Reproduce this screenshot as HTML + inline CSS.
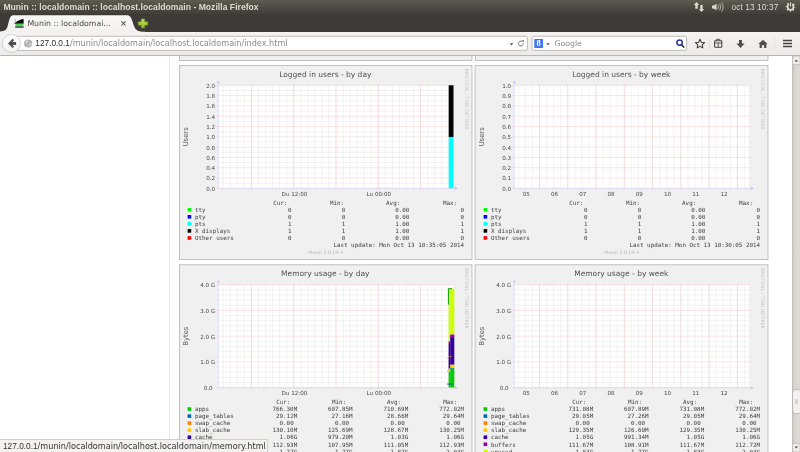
<!DOCTYPE html>
<html lang="en"><head><meta charset="utf-8">
<title>Munin :: localdomain :: localhost.localdomain</title>
<style>
html,body{margin:0;padding:0;}
body{width:800px;height:452px;overflow:hidden;position:relative;background:#fff;font-family:"Liberation Sans","DejaVu Sans",sans-serif;}
.abs{position:absolute;}
#gfx{position:absolute;left:0;top:0;width:800px;height:452px;will-change:transform;}
#gfx text{font-family:"DejaVu Sans","Liberation Sans",sans-serif;}
#gfx .ti{font-size:7.5px;fill:#505050;}
#gfx .ax{font-size:5.6px;fill:#484848;}
#gfx .yl{font-size:6.8px;fill:#585858;}
#gfx .mo{font-family:"DejaVu Sans Mono","Liberation Mono",monospace;font-size:5.86px;fill:#404040;}
#gfx .wm{font-size:4.55px;fill:#c0c0c0;letter-spacing:0.1px;}
#gfx .mu{font-size:4.6px;fill:#b5b5b5;}
/* chrome */
#titlebar{left:0;top:0;width:800px;height:14px;background:linear-gradient(#5f5c51,#504e46 40%,#3f3e39);}
#titlebar .t{left:3.4px;top:2.3px;font-family:"Liberation Sans",sans-serif;font-size:8.6px;font-weight:bold;color:#dfdbd2;white-space:nowrap;line-height:11px;letter-spacing:0.02px;}
#tabbar{left:0;top:14px;width:800px;height:18px;background:#3c3b37;}
#navbar{left:0;top:32px;width:800px;height:23px;background:linear-gradient(#f4f3f2,#ecebe8);border-bottom:1px solid #b9b6b1;box-sizing:content-box;}
#vline{left:169px;top:56px;width:1px;height:396px;background:#e5e7fb;}
#sb{left:792px;top:56px;width:8px;height:396px;background:linear-gradient(90deg,#cfccc7,#dbd8d4 40%,#dddad6);border-left:1px solid #c2beb8;box-sizing:border-box;}
#status{left:0;top:439px;width:268px;height:13px;background:#f3f2f1;border-top:1px solid #d2cfcb;border-right:1px solid #d2cfcb;border-top-right-radius:2px;box-sizing:border-box;font-family:"DejaVu Sans","Liberation Sans",sans-serif;font-size:8.14px;color:#333;line-height:13.5px;padding-left:3px;white-space:nowrap;}
#status .d{color:#333;}

#titlebar .clock{left:731.5px;top:2.4px;font-size:8.3px;color:#dfdbd2;white-space:nowrap;line-height:11px;letter-spacing:0.1px;}
#tabbar .tabt{left:27.4px;top:4.3px;font-family:"DejaVu Sans","Liberation Sans",sans-serif;font-size:7.75px;color:#4a4a4a;white-space:nowrap;line-height:11px;}
#urlbar{left:19.5px;top:4px;width:507.5px;height:13px;background:#fff;border:1px solid #bab7b2;border-radius:2px;box-sizing:content-box;}
#searchbar{left:531.5px;top:4px;width:154.5px;height:13px;background:#fff;border:1px solid #bab7b2;border-radius:2px;box-sizing:content-box;}
#back{left:1.8px;top:2px;width:18px;height:18px;border-radius:50%;background:linear-gradient(#fdfdfd,#eceae8);border:1px solid #aab3bf;box-sizing:content-box;}
.urlt{left:35.3px;top:6.1px;font-family:"DejaVu Sans","Liberation Sans",sans-serif;font-size:8.14px;color:#8a8a8a;white-space:nowrap;line-height:11px;}
.d{font-family:"Liberation Sans",sans-serif;font-size:8.3px;color:#2a2a2a;}
.gt{left:554.4px;top:6.1px;font-family:"DejaVu Sans","Liberation Sans",sans-serif;font-size:7.8px;color:#8c8c8c;white-space:nowrap;line-height:11px;}
</style></head>
<body>
<svg id="gfx" width="800" height="452" viewBox="0 0 800 452">
<rect x="179.5" y="40.5" width="292.5" height="20" fill="#f0f0f0" stroke="#b4b4b4" stroke-width="0.8"/>
<rect x="475.5" y="40.5" width="292.5" height="20" fill="#f0f0f0" stroke="#b4b4b4" stroke-width="0.8"/>
<rect x="179.50" y="65.50" width="292.50" height="194.00" fill="#f0f0f0" stroke="#b4b4b4" stroke-width="0.8"/>
<rect x="218.40" y="85.30" width="234.50" height="103.10" fill="#fff"/>
<path d="M223.20 85.30v103.10M230.25 85.30v103.10M237.30 85.30v103.10M244.35 85.30v103.10M251.40 85.30v103.10M258.45 85.30v103.10M265.50 85.30v103.10M272.55 85.30v103.10M279.60 85.30v103.10M286.65 85.30v103.10M293.70 85.30v103.10M300.75 85.30v103.10M307.80 85.30v103.10M314.85 85.30v103.10M321.90 85.30v103.10M328.95 85.30v103.10M336.00 85.30v103.10M343.05 85.30v103.10M350.10 85.30v103.10M357.15 85.30v103.10M364.20 85.30v103.10M371.25 85.30v103.10M378.30 85.30v103.10M385.35 85.30v103.10M392.40 85.30v103.10M399.45 85.30v103.10M406.50 85.30v103.10M413.55 85.30v103.10M420.60 85.30v103.10M427.65 85.30v103.10M434.70 85.30v103.10M441.75 85.30v103.10M448.80 85.30v103.10M218.40 90.45h234.50M218.40 100.77h234.50M218.40 111.08h234.50M218.40 121.38h234.50M218.40 131.69h234.50M218.40 142.00h234.50M218.40 152.31h234.50M218.40 162.62h234.50M218.40 172.94h234.50M218.40 183.25h234.50" stroke="#d6d2d2" stroke-width="0.45" fill="none" opacity="0.6"/>
<path d="M251.40 84.80v104.60M293.70 84.80v104.60M336.00 84.80v104.60M378.30 84.80v104.60M420.60 84.80v104.60M216.40 188.40h238.00M216.40 178.09h238.00M216.40 167.78h238.00M216.40 157.47h238.00M216.40 147.16h238.00M216.40 136.85h238.00M216.40 126.54h238.00M216.40 116.23h238.00M216.40 105.92h238.00M216.40 95.61h238.00M216.40 85.30h238.00" stroke="#f6aaaa" stroke-width="0.5" fill="none" opacity="0.62"/>
<rect x="448.70" y="85.30" width="4.8" height="51.8" fill="#000"/><rect x="448.70" y="136.90" width="4.8" height="51.5" fill="#00ffff"/>
<path d="M218.40 82.30V188.40H455.90" stroke="#d2d4f6" stroke-width="0.6" fill="none"/>
<path d="M454.90 187.10l3 1.3l-3 1.3zM217.10 83.30l1.3 -2.6l1.3 2.6z" fill="#b9bcf0"/>
<text x="325.30" y="76.60" class="ti" text-anchor="middle">Logged in users - by day</text>
<text x="215.20" y="190.80" class="ax" text-anchor="end">0.0</text>
<text x="215.20" y="180.49" class="ax" text-anchor="end">0.2</text>
<text x="215.20" y="170.18" class="ax" text-anchor="end">0.4</text>
<text x="215.20" y="159.87" class="ax" text-anchor="end">0.6</text>
<text x="215.20" y="149.56" class="ax" text-anchor="end">0.8</text>
<text x="215.20" y="139.25" class="ax" text-anchor="end">1.0</text>
<text x="215.20" y="128.94" class="ax" text-anchor="end">1.2</text>
<text x="215.20" y="118.63" class="ax" text-anchor="end">1.4</text>
<text x="215.20" y="108.32" class="ax" text-anchor="end">1.6</text>
<text x="215.20" y="98.01" class="ax" text-anchor="end">1.8</text>
<text x="215.20" y="87.70" class="ax" text-anchor="end">2.0</text>
<text x="294.40" y="196.00" class="ax" text-anchor="middle">Du 12:00</text>
<text x="378.80" y="196.00" class="ax" text-anchor="middle">Lu 00:00</text>
<text transform="translate(188.30 136.85) rotate(-90)" class="yl" text-anchor="middle">Users</text>
<text transform="translate(465.20 68.80) rotate(90)" class="wm">RRDTOOL / TOBI OETIKER</text>
<text x="273.20" y="204.90" class="mo">Cur:</text>
<text x="329.90" y="204.90" class="mo">Min:</text>
<text x="386.10" y="204.90" class="mo">Avg:</text>
<text x="443.00" y="204.90" class="mo">Max:</text>
<rect x="187.60" y="207.95" width="3.6" height="3.6" fill="#00ff00"/>
<text x="195.00" y="211.95" class="mo">tty</text>
<text x="291.60" y="211.95" class="mo" text-anchor="end" xml:space="preserve">0</text>
<text x="345.40" y="211.95" class="mo" text-anchor="end" xml:space="preserve">0</text>
<text x="409.40" y="211.95" class="mo" text-anchor="end" xml:space="preserve">0.00</text>
<text x="464.00" y="211.95" class="mo" text-anchor="end" xml:space="preserve">0</text>
<rect x="187.60" y="215.00" width="3.6" height="3.6" fill="#0000ff"/>
<text x="195.00" y="219.00" class="mo">pty</text>
<text x="291.60" y="219.00" class="mo" text-anchor="end" xml:space="preserve">0</text>
<text x="345.40" y="219.00" class="mo" text-anchor="end" xml:space="preserve">0</text>
<text x="409.40" y="219.00" class="mo" text-anchor="end" xml:space="preserve">0.00</text>
<text x="464.00" y="219.00" class="mo" text-anchor="end" xml:space="preserve">0</text>
<rect x="187.60" y="222.05" width="3.6" height="3.6" fill="#00ffff"/>
<text x="195.00" y="226.05" class="mo">pts</text>
<text x="291.60" y="226.05" class="mo" text-anchor="end" xml:space="preserve">1</text>
<text x="345.40" y="226.05" class="mo" text-anchor="end" xml:space="preserve">1</text>
<text x="409.40" y="226.05" class="mo" text-anchor="end" xml:space="preserve">1.00</text>
<text x="464.00" y="226.05" class="mo" text-anchor="end" xml:space="preserve">1</text>
<rect x="187.60" y="229.10" width="3.6" height="3.6" fill="#000"/>
<text x="195.00" y="233.10" class="mo">X displays</text>
<text x="291.60" y="233.10" class="mo" text-anchor="end" xml:space="preserve">1</text>
<text x="345.40" y="233.10" class="mo" text-anchor="end" xml:space="preserve">1</text>
<text x="409.40" y="233.10" class="mo" text-anchor="end" xml:space="preserve">1.00</text>
<text x="464.00" y="233.10" class="mo" text-anchor="end" xml:space="preserve">1</text>
<rect x="187.60" y="236.15" width="3.6" height="3.6" fill="#ff0000"/>
<text x="195.00" y="240.15" class="mo">Other users</text>
<text x="291.60" y="240.15" class="mo" text-anchor="end" xml:space="preserve">0</text>
<text x="345.40" y="240.15" class="mo" text-anchor="end" xml:space="preserve">0</text>
<text x="409.40" y="240.15" class="mo" text-anchor="end" xml:space="preserve">0.00</text>
<text x="464.00" y="240.15" class="mo" text-anchor="end" xml:space="preserve">0</text>
<text x="464.00" y="247.20" class="mo" text-anchor="end">Last update: Mon Oct 13 10:35:05 2014</text>
<text x="325.50" y="253.70" class="mu" text-anchor="middle">Munin 2.0.19-3</text>
<rect x="475.10" y="65.50" width="292.90" height="194.00" fill="#f0f0f0" stroke="#b4b4b4" stroke-width="0.8"/>
<rect x="514.40" y="85.30" width="234.50" height="103.10" fill="#fff"/>
<path d="M518.29 85.30v103.10M525.36 85.30v103.10M532.43 85.30v103.10M539.50 85.30v103.10M546.57 85.30v103.10M553.64 85.30v103.10M560.71 85.30v103.10M567.78 85.30v103.10M574.85 85.30v103.10M581.92 85.30v103.10M588.99 85.30v103.10M596.06 85.30v103.10M603.13 85.30v103.10M610.20 85.30v103.10M617.27 85.30v103.10M624.34 85.30v103.10M631.41 85.30v103.10M638.48 85.30v103.10M645.55 85.30v103.10M652.62 85.30v103.10M659.69 85.30v103.10M666.76 85.30v103.10M673.83 85.30v103.10M680.90 85.30v103.10M687.97 85.30v103.10M695.04 85.30v103.10M702.11 85.30v103.10M709.18 85.30v103.10M716.25 85.30v103.10M723.32 85.30v103.10M730.39 85.30v103.10M737.46 85.30v103.10M744.53 85.30v103.10" stroke="#d6d2d2" stroke-width="0.45" fill="none" opacity="0.6"/>
<path d="M539.50 84.80v104.60M567.78 84.80v104.60M596.06 84.80v104.60M624.34 84.80v104.60M652.62 84.80v104.60M680.90 84.80v104.60M709.18 84.80v104.60M737.46 84.80v104.60M512.40 188.40h238.00M512.40 178.09h238.00M512.40 167.78h238.00M512.40 157.47h238.00M512.40 147.16h238.00M512.40 136.85h238.00M512.40 126.54h238.00M512.40 116.23h238.00M512.40 105.92h238.00M512.40 95.61h238.00M512.40 85.30h238.00" stroke="#f6aaaa" stroke-width="0.5" fill="none" opacity="0.62"/>

<path d="M514.40 82.30V188.40H751.90" stroke="#d2d4f6" stroke-width="0.6" fill="none"/>
<path d="M750.90 187.10l3 1.3l-3 1.3zM513.10 83.30l1.3 -2.6l1.3 2.6z" fill="#b9bcf0"/>
<text x="621.30" y="76.60" class="ti" text-anchor="middle">Logged in users - by week</text>
<text x="511.20" y="190.80" class="ax" text-anchor="end">0.0</text>
<text x="511.20" y="180.49" class="ax" text-anchor="end">0.1</text>
<text x="511.20" y="170.18" class="ax" text-anchor="end">0.2</text>
<text x="511.20" y="159.87" class="ax" text-anchor="end">0.3</text>
<text x="511.20" y="149.56" class="ax" text-anchor="end">0.4</text>
<text x="511.20" y="139.25" class="ax" text-anchor="end">0.5</text>
<text x="511.20" y="128.94" class="ax" text-anchor="end">0.6</text>
<text x="511.20" y="118.63" class="ax" text-anchor="end">0.7</text>
<text x="511.20" y="108.32" class="ax" text-anchor="end">0.8</text>
<text x="511.20" y="98.01" class="ax" text-anchor="end">0.9</text>
<text x="511.20" y="87.70" class="ax" text-anchor="end">1.0</text>
<text x="526.20" y="196.00" class="ax" text-anchor="middle">05</text>
<text x="554.46" y="196.00" class="ax" text-anchor="middle">06</text>
<text x="582.72" y="196.00" class="ax" text-anchor="middle">07</text>
<text x="610.98" y="196.00" class="ax" text-anchor="middle">08</text>
<text x="639.24" y="196.00" class="ax" text-anchor="middle">09</text>
<text x="667.50" y="196.00" class="ax" text-anchor="middle">10</text>
<text x="695.76" y="196.00" class="ax" text-anchor="middle">11</text>
<text x="724.02" y="196.00" class="ax" text-anchor="middle">12</text>
<text transform="translate(484.30 136.85) rotate(-90)" class="yl" text-anchor="middle">Users</text>
<text transform="translate(761.20 68.80) rotate(90)" class="wm">RRDTOOL / TOBI OETIKER</text>
<text x="569.20" y="204.90" class="mo">Cur:</text>
<text x="625.90" y="204.90" class="mo">Min:</text>
<text x="682.10" y="204.90" class="mo">Avg:</text>
<text x="739.00" y="204.90" class="mo">Max:</text>
<rect x="483.60" y="207.95" width="3.6" height="3.6" fill="#00ff00"/>
<text x="491.00" y="211.95" class="mo">tty</text>
<text x="587.60" y="211.95" class="mo" text-anchor="end" xml:space="preserve">0</text>
<text x="641.40" y="211.95" class="mo" text-anchor="end" xml:space="preserve">0</text>
<text x="705.40" y="211.95" class="mo" text-anchor="end" xml:space="preserve">0.00</text>
<text x="760.00" y="211.95" class="mo" text-anchor="end" xml:space="preserve">0</text>
<rect x="483.60" y="215.00" width="3.6" height="3.6" fill="#0000ff"/>
<text x="491.00" y="219.00" class="mo">pty</text>
<text x="587.60" y="219.00" class="mo" text-anchor="end" xml:space="preserve">0</text>
<text x="641.40" y="219.00" class="mo" text-anchor="end" xml:space="preserve">0</text>
<text x="705.40" y="219.00" class="mo" text-anchor="end" xml:space="preserve">0.00</text>
<text x="760.00" y="219.00" class="mo" text-anchor="end" xml:space="preserve">0</text>
<rect x="483.60" y="222.05" width="3.6" height="3.6" fill="#00ffff"/>
<text x="491.00" y="226.05" class="mo">pts</text>
<text x="587.60" y="226.05" class="mo" text-anchor="end" xml:space="preserve">1</text>
<text x="641.40" y="226.05" class="mo" text-anchor="end" xml:space="preserve">1</text>
<text x="705.40" y="226.05" class="mo" text-anchor="end" xml:space="preserve">1.00</text>
<text x="760.00" y="226.05" class="mo" text-anchor="end" xml:space="preserve">1</text>
<rect x="483.60" y="229.10" width="3.6" height="3.6" fill="#000"/>
<text x="491.00" y="233.10" class="mo">X displays</text>
<text x="587.60" y="233.10" class="mo" text-anchor="end" xml:space="preserve">1</text>
<text x="641.40" y="233.10" class="mo" text-anchor="end" xml:space="preserve">1</text>
<text x="705.40" y="233.10" class="mo" text-anchor="end" xml:space="preserve">1.00</text>
<text x="760.00" y="233.10" class="mo" text-anchor="end" xml:space="preserve">1</text>
<rect x="483.60" y="236.15" width="3.6" height="3.6" fill="#ff0000"/>
<text x="491.00" y="240.15" class="mo">Other users</text>
<text x="587.60" y="240.15" class="mo" text-anchor="end" xml:space="preserve">0</text>
<text x="641.40" y="240.15" class="mo" text-anchor="end" xml:space="preserve">0</text>
<text x="705.40" y="240.15" class="mo" text-anchor="end" xml:space="preserve">0.00</text>
<text x="760.00" y="240.15" class="mo" text-anchor="end" xml:space="preserve">0</text>
<text x="760.00" y="247.20" class="mo" text-anchor="end">Last update: Mon Oct 13 10:30:05 2014</text>
<text x="621.50" y="253.70" class="mu" text-anchor="middle">Munin 2.0.19-3</text>
<rect x="179.50" y="264.80" width="292.50" height="259.00" fill="#f0f0f0" stroke="#b4b4b4" stroke-width="0.8"/>
<rect x="218.40" y="284.60" width="234.50" height="103.10" fill="#fff"/>
<path d="M223.20 284.60v103.10M230.25 284.60v103.10M237.30 284.60v103.10M244.35 284.60v103.10M251.40 284.60v103.10M258.45 284.60v103.10M265.50 284.60v103.10M272.55 284.60v103.10M279.60 284.60v103.10M286.65 284.60v103.10M293.70 284.60v103.10M300.75 284.60v103.10M307.80 284.60v103.10M314.85 284.60v103.10M321.90 284.60v103.10M328.95 284.60v103.10M336.00 284.60v103.10M343.05 284.60v103.10M350.10 284.60v103.10M357.15 284.60v103.10M364.20 284.60v103.10M371.25 284.60v103.10M378.30 284.60v103.10M385.35 284.60v103.10M392.40 284.60v103.10M399.45 284.60v103.10M406.50 284.60v103.10M413.55 284.60v103.10M420.60 284.60v103.10M427.65 284.60v103.10M434.70 284.60v103.10M441.75 284.60v103.10M448.80 284.60v103.10M218.40 289.75h234.50M218.40 294.91h234.50M218.40 300.06h234.50M218.40 305.22h234.50M218.40 315.54h234.50M218.40 320.69h234.50M218.40 325.85h234.50M218.40 331.00h234.50M218.40 341.32h234.50M218.40 346.47h234.50M218.40 351.62h234.50M218.40 356.78h234.50M218.40 367.10h234.50M218.40 372.25h234.50M218.40 377.41h234.50M218.40 382.56h234.50" stroke="#d6d2d2" stroke-width="0.45" fill="none" opacity="0.6"/>
<path d="M251.40 284.10v104.60M293.70 284.10v104.60M336.00 284.10v104.60M378.30 284.10v104.60M420.60 284.10v104.60M216.40 387.70h238.00M216.40 361.92h238.00M216.40 336.14h238.00M216.40 310.36h238.00M216.40 284.58h238.00" stroke="#f6aaaa" stroke-width="0.5" fill="none" opacity="0.62"/>
<rect x="448.60" y="372.39" width="1.70" height="15.46" fill="#00cc00"/><rect x="448.60" y="371.69" width="1.70" height="0.85" fill="#0066b3"/><rect x="448.60" y="368.52" width="1.70" height="3.32" fill="#ffcc00"/><rect x="448.60" y="343.87" width="1.70" height="24.80" fill="#330099"/><rect x="448.60" y="341.17" width="1.70" height="2.86" fill="#990099"/><rect x="448.60" y="288.45" width="1.70" height="52.87" fill="#ccff00"/><rect x="450.20" y="368.42" width="4.10" height="19.43" fill="#00cc00"/><rect x="450.20" y="367.69" width="4.10" height="0.87" fill="#0066b3"/><rect x="450.20" y="364.42" width="4.10" height="3.42" fill="#ffcc00"/><rect x="450.20" y="337.09" width="4.10" height="27.48" fill="#330099"/><rect x="450.20" y="334.26" width="4.10" height="2.99" fill="#990099"/><rect x="450.20" y="288.63" width="4.10" height="45.78" fill="#ccff00"/><path d="M448.40 304.69V288.70h3.6" stroke="#00a000" stroke-width="1" fill="none"/><path d="M447.40 358.83l1.8 -2.4h2.6" stroke="#e8900a" stroke-width="0.8" fill="none"/><path d="M447.40 371.72l1.6 -2.6l2 -2.2" stroke="#e8900a" stroke-width="0.8" fill="none"/><path d="M447.00 384.09h5.6" stroke="#0a4fa8" stroke-width="0.9" fill="none"/>
<path d="M218.40 281.60V387.70H455.90" stroke="#d2d4f6" stroke-width="0.6" fill="none"/>
<path d="M454.90 386.40l3 1.3l-3 1.3zM217.10 282.60l1.3 -2.6l1.3 2.6z" fill="#b9bcf0"/>
<text x="325.30" y="275.90" class="ti" text-anchor="middle">Memory usage - by day</text>
<text x="212.60" y="390.10" class="ax" text-anchor="end">0.0</text>
<text x="215.20" y="364.32" class="ax" text-anchor="end">1.0 G</text>
<text x="215.20" y="338.54" class="ax" text-anchor="end">2.0 G</text>
<text x="215.20" y="312.76" class="ax" text-anchor="end">3.0 G</text>
<text x="215.20" y="286.98" class="ax" text-anchor="end">4.0 G</text>
<text x="294.40" y="395.30" class="ax" text-anchor="middle">Du 12:00</text>
<text x="378.80" y="395.30" class="ax" text-anchor="middle">Lu 00:00</text>
<text transform="translate(188.30 336.15) rotate(-90)" class="yl" text-anchor="middle">Bytes</text>
<text transform="translate(465.20 268.10) rotate(90)" class="wm">RRDTOOL / TOBI OETIKER</text>
<text x="276.20" y="404.20" class="mo">Cur:</text>
<text x="331.90" y="404.20" class="mo">Min:</text>
<text x="387.00" y="404.20" class="mo">Avg:</text>
<text x="443.20" y="404.20" class="mo">Max:</text>
<rect x="187.60" y="407.25" width="3.6" height="3.6" fill="#00cc00"/>
<text x="195.00" y="411.25" class="mo">apps</text>
<text x="297.20" y="411.25" class="mo" text-anchor="end" xml:space="preserve">766.30M</text>
<text x="352.60" y="411.25" class="mo" text-anchor="end" xml:space="preserve">607.85M</text>
<text x="408.20" y="411.25" class="mo" text-anchor="end" xml:space="preserve">710.69M</text>
<text x="464.00" y="411.25" class="mo" text-anchor="end" xml:space="preserve">772.02M</text>
<rect x="187.60" y="414.30" width="3.6" height="3.6" fill="#0066b3"/>
<text x="195.00" y="418.30" class="mo">page_tables</text>
<text x="297.20" y="418.30" class="mo" text-anchor="end" xml:space="preserve">29.12M</text>
<text x="352.60" y="418.30" class="mo" text-anchor="end" xml:space="preserve">27.16M</text>
<text x="408.20" y="418.30" class="mo" text-anchor="end" xml:space="preserve">28.66M</text>
<text x="464.00" y="418.30" class="mo" text-anchor="end" xml:space="preserve">29.64M</text>
<rect x="187.60" y="421.35" width="3.6" height="3.6" fill="#ff8000"/>
<text x="195.00" y="425.35" class="mo">swap_cache</text>
<text x="297.20" y="425.35" class="mo" text-anchor="end" xml:space="preserve">0.00 </text>
<text x="352.60" y="425.35" class="mo" text-anchor="end" xml:space="preserve">0.00 </text>
<text x="408.20" y="425.35" class="mo" text-anchor="end" xml:space="preserve">0.00 </text>
<text x="464.00" y="425.35" class="mo" text-anchor="end" xml:space="preserve">0.00 </text>
<rect x="187.60" y="428.40" width="3.6" height="3.6" fill="#ffcc00"/>
<text x="195.00" y="432.40" class="mo">slab_cache</text>
<text x="297.20" y="432.40" class="mo" text-anchor="end" xml:space="preserve">130.10M</text>
<text x="352.60" y="432.40" class="mo" text-anchor="end" xml:space="preserve">125.69M</text>
<text x="408.20" y="432.40" class="mo" text-anchor="end" xml:space="preserve">128.67M</text>
<text x="464.00" y="432.40" class="mo" text-anchor="end" xml:space="preserve">130.25M</text>
<rect x="187.60" y="435.45" width="3.6" height="3.6" fill="#330099"/>
<text x="195.00" y="439.45" class="mo">cache</text>
<text x="297.20" y="439.45" class="mo" text-anchor="end" xml:space="preserve">1.06G</text>
<text x="352.60" y="439.45" class="mo" text-anchor="end" xml:space="preserve">979.20M</text>
<text x="408.20" y="439.45" class="mo" text-anchor="end" xml:space="preserve">1.03G</text>
<text x="464.00" y="439.45" class="mo" text-anchor="end" xml:space="preserve">1.06G</text>
<rect x="187.60" y="442.50" width="3.6" height="3.6" fill="#990099"/>
<text x="195.00" y="446.50" class="mo">buffers</text>
<text x="297.20" y="446.50" class="mo" text-anchor="end" xml:space="preserve">112.93M</text>
<text x="352.60" y="446.50" class="mo" text-anchor="end" xml:space="preserve">107.95M</text>
<text x="408.20" y="446.50" class="mo" text-anchor="end" xml:space="preserve">111.05M</text>
<text x="464.00" y="446.50" class="mo" text-anchor="end" xml:space="preserve">112.93M</text>
<rect x="187.60" y="449.55" width="3.6" height="3.6" fill="#ccff00"/>
<text x="195.00" y="453.55" class="mo">unused</text>
<text x="297.20" y="453.55" class="mo" text-anchor="end" xml:space="preserve">1.77G</text>
<text x="352.60" y="453.55" class="mo" text-anchor="end" xml:space="preserve">1.77G</text>
<text x="408.20" y="453.55" class="mo" text-anchor="end" xml:space="preserve">1.87G</text>
<text x="464.00" y="453.55" class="mo" text-anchor="end" xml:space="preserve">2.04G</text>
<rect x="187.60" y="456.60" width="3.6" height="3.6" fill="#ff0000"/>
<text x="195.00" y="460.60" class="mo">swap</text>
<text x="297.20" y="460.60" class="mo" text-anchor="end" xml:space="preserve">0.00 </text>
<text x="352.60" y="460.60" class="mo" text-anchor="end" xml:space="preserve">0.00 </text>
<text x="408.20" y="460.60" class="mo" text-anchor="end" xml:space="preserve">0.00 </text>
<text x="464.00" y="460.60" class="mo" text-anchor="end" xml:space="preserve">0.00 </text>
<rect x="475.10" y="264.80" width="292.90" height="259.00" fill="#f0f0f0" stroke="#b4b4b4" stroke-width="0.8"/>
<rect x="514.40" y="284.60" width="234.50" height="103.10" fill="#fff"/>
<path d="M518.29 284.60v103.10M525.36 284.60v103.10M532.43 284.60v103.10M539.50 284.60v103.10M546.57 284.60v103.10M553.64 284.60v103.10M560.71 284.60v103.10M567.78 284.60v103.10M574.85 284.60v103.10M581.92 284.60v103.10M588.99 284.60v103.10M596.06 284.60v103.10M603.13 284.60v103.10M610.20 284.60v103.10M617.27 284.60v103.10M624.34 284.60v103.10M631.41 284.60v103.10M638.48 284.60v103.10M645.55 284.60v103.10M652.62 284.60v103.10M659.69 284.60v103.10M666.76 284.60v103.10M673.83 284.60v103.10M680.90 284.60v103.10M687.97 284.60v103.10M695.04 284.60v103.10M702.11 284.60v103.10M709.18 284.60v103.10M716.25 284.60v103.10M723.32 284.60v103.10M730.39 284.60v103.10M737.46 284.60v103.10M744.53 284.60v103.10M514.40 289.75h234.50M514.40 294.91h234.50M514.40 300.06h234.50M514.40 305.22h234.50M514.40 315.54h234.50M514.40 320.69h234.50M514.40 325.85h234.50M514.40 331.00h234.50M514.40 341.32h234.50M514.40 346.47h234.50M514.40 351.62h234.50M514.40 356.78h234.50M514.40 367.10h234.50M514.40 372.25h234.50M514.40 377.41h234.50M514.40 382.56h234.50" stroke="#d6d2d2" stroke-width="0.45" fill="none" opacity="0.6"/>
<path d="M539.50 284.10v104.60M567.78 284.10v104.60M596.06 284.10v104.60M624.34 284.10v104.60M652.62 284.10v104.60M680.90 284.10v104.60M709.18 284.10v104.60M737.46 284.10v104.60M512.40 387.70h238.00M512.40 361.92h238.00M512.40 336.14h238.00M512.40 310.36h238.00M512.40 284.58h238.00" stroke="#f6aaaa" stroke-width="0.5" fill="none" opacity="0.62"/>

<path d="M514.40 281.60V387.70H751.90" stroke="#d2d4f6" stroke-width="0.6" fill="none"/>
<path d="M750.90 386.40l3 1.3l-3 1.3zM513.10 282.60l1.3 -2.6l1.3 2.6z" fill="#b9bcf0"/>
<text x="621.30" y="275.90" class="ti" text-anchor="middle">Memory usage - by week</text>
<text x="508.60" y="390.10" class="ax" text-anchor="end">0.0</text>
<text x="511.20" y="364.32" class="ax" text-anchor="end">1.0 G</text>
<text x="511.20" y="338.54" class="ax" text-anchor="end">2.0 G</text>
<text x="511.20" y="312.76" class="ax" text-anchor="end">3.0 G</text>
<text x="511.20" y="286.98" class="ax" text-anchor="end">4.0 G</text>
<text x="526.20" y="395.30" class="ax" text-anchor="middle">05</text>
<text x="554.46" y="395.30" class="ax" text-anchor="middle">06</text>
<text x="582.72" y="395.30" class="ax" text-anchor="middle">07</text>
<text x="610.98" y="395.30" class="ax" text-anchor="middle">08</text>
<text x="639.24" y="395.30" class="ax" text-anchor="middle">09</text>
<text x="667.50" y="395.30" class="ax" text-anchor="middle">10</text>
<text x="695.76" y="395.30" class="ax" text-anchor="middle">11</text>
<text x="724.02" y="395.30" class="ax" text-anchor="middle">12</text>
<text transform="translate(484.30 336.15) rotate(-90)" class="yl" text-anchor="middle">Bytes</text>
<text transform="translate(761.20 268.10) rotate(90)" class="wm">RRDTOOL / TOBI OETIKER</text>
<text x="572.20" y="404.20" class="mo">Cur:</text>
<text x="627.90" y="404.20" class="mo">Min:</text>
<text x="683.00" y="404.20" class="mo">Avg:</text>
<text x="739.20" y="404.20" class="mo">Max:</text>
<rect x="483.60" y="407.25" width="3.6" height="3.6" fill="#00cc00"/>
<text x="491.00" y="411.25" class="mo">apps</text>
<text x="593.20" y="411.25" class="mo" text-anchor="end" xml:space="preserve">731.08M</text>
<text x="648.60" y="411.25" class="mo" text-anchor="end" xml:space="preserve">607.89M</text>
<text x="704.20" y="411.25" class="mo" text-anchor="end" xml:space="preserve">731.08M</text>
<text x="760.00" y="411.25" class="mo" text-anchor="end" xml:space="preserve">772.02M</text>
<rect x="483.60" y="414.30" width="3.6" height="3.6" fill="#0066b3"/>
<text x="491.00" y="418.30" class="mo">page_tables</text>
<text x="593.20" y="418.30" class="mo" text-anchor="end" xml:space="preserve">29.05M</text>
<text x="648.60" y="418.30" class="mo" text-anchor="end" xml:space="preserve">27.26M</text>
<text x="704.20" y="418.30" class="mo" text-anchor="end" xml:space="preserve">29.05M</text>
<text x="760.00" y="418.30" class="mo" text-anchor="end" xml:space="preserve">29.64M</text>
<rect x="483.60" y="421.35" width="3.6" height="3.6" fill="#ff8000"/>
<text x="491.00" y="425.35" class="mo">swap_cache</text>
<text x="593.20" y="425.35" class="mo" text-anchor="end" xml:space="preserve">0.00 </text>
<text x="648.60" y="425.35" class="mo" text-anchor="end" xml:space="preserve">0.00 </text>
<text x="704.20" y="425.35" class="mo" text-anchor="end" xml:space="preserve">0.00 </text>
<text x="760.00" y="425.35" class="mo" text-anchor="end" xml:space="preserve">0.00 </text>
<rect x="483.60" y="428.40" width="3.6" height="3.6" fill="#ffcc00"/>
<text x="491.00" y="432.40" class="mo">slab_cache</text>
<text x="593.20" y="432.40" class="mo" text-anchor="end" xml:space="preserve">129.35M</text>
<text x="648.60" y="432.40" class="mo" text-anchor="end" xml:space="preserve">126.60M</text>
<text x="704.20" y="432.40" class="mo" text-anchor="end" xml:space="preserve">129.35M</text>
<text x="760.00" y="432.40" class="mo" text-anchor="end" xml:space="preserve">130.25M</text>
<rect x="483.60" y="435.45" width="3.6" height="3.6" fill="#330099"/>
<text x="491.00" y="439.45" class="mo">cache</text>
<text x="593.20" y="439.45" class="mo" text-anchor="end" xml:space="preserve">1.05G</text>
<text x="648.60" y="439.45" class="mo" text-anchor="end" xml:space="preserve">991.34M</text>
<text x="704.20" y="439.45" class="mo" text-anchor="end" xml:space="preserve">1.05G</text>
<text x="760.00" y="439.45" class="mo" text-anchor="end" xml:space="preserve">1.06G</text>
<rect x="483.60" y="442.50" width="3.6" height="3.6" fill="#990099"/>
<text x="491.00" y="446.50" class="mo">buffers</text>
<text x="593.20" y="446.50" class="mo" text-anchor="end" xml:space="preserve">111.67M</text>
<text x="648.60" y="446.50" class="mo" text-anchor="end" xml:space="preserve">108.91M</text>
<text x="704.20" y="446.50" class="mo" text-anchor="end" xml:space="preserve">111.67M</text>
<text x="760.00" y="446.50" class="mo" text-anchor="end" xml:space="preserve">112.72M</text>
<rect x="483.60" y="449.55" width="3.6" height="3.6" fill="#ccff00"/>
<text x="491.00" y="453.55" class="mo">unused</text>
<text x="593.20" y="453.55" class="mo" text-anchor="end" xml:space="preserve">1.83G</text>
<text x="648.60" y="453.55" class="mo" text-anchor="end" xml:space="preserve">1.77G</text>
<text x="704.20" y="453.55" class="mo" text-anchor="end" xml:space="preserve">1.83G</text>
<text x="760.00" y="453.55" class="mo" text-anchor="end" xml:space="preserve">2.04G</text>
<rect x="483.60" y="456.60" width="3.6" height="3.6" fill="#ff0000"/>
<text x="491.00" y="460.60" class="mo">swap</text>
<text x="593.20" y="460.60" class="mo" text-anchor="end" xml:space="preserve">0.00 </text>
<text x="648.60" y="460.60" class="mo" text-anchor="end" xml:space="preserve">0.00 </text>
<text x="704.20" y="460.60" class="mo" text-anchor="end" xml:space="preserve">0.00 </text>
<text x="760.00" y="460.60" class="mo" text-anchor="end" xml:space="preserve">0.00 </text>
</svg>
<div id="chrome" class="abs" style="left:0;top:0;width:800px;height:452px;will-change:transform;">
<div id="vline" class="abs"></div>
<div id="sb" class="abs"></div>
<svg class="abs" style="left:790px;top:55px" width="10" height="397" viewBox="790 55 10 397">
<path d="M792.6 64.6V59q0 -3 3 -3H800V64.6z" fill="#f0eeec" stroke="#bdb9b4" stroke-width="0.7"/>
<path d="M794.6 61.4l1.7 -1.9l1.7 1.9z" fill="#444"/>
<path d="M792.6 443.6V449q0 3 3 3H800V443.6z" fill="#f0eeec" stroke="#bdb9b4" stroke-width="0.7"/>
<path d="M794.6 446.6l1.7 1.9l1.7 -1.9z" fill="#444"/>
<rect x="792.6" y="389.6" width="9" height="24" rx="3" fill="#f2f1ef" stroke="#b3afa9" stroke-width="0.8"/>
<path d="M795 400h3M795 401.6h3M795 403.2h3" stroke="#a9a59f" stroke-width="0.6"/>
</svg>
<div id="titlebar" class="abs"><div class="abs t">Munin :: localdomain :: localhost.localdomain - Mozilla Firefox</div>
<div class="abs clock">oct 13 10:37</div>
<svg class="abs" style="left:690px;top:0" width="110" height="14" viewBox="690 0 110 14">
<g fill="#dfdbd2">
<path d="M696.5 2l2.6 3.1h-1.4v3.7h-2.4v-3.7h-1.4z"/>
<path d="M701.5 12l-2.6 -3h1.4v-4h2.4v4h1.4z"/>
<path d="M712 5.5h1.7l2.8 -1.7v6.4l-2.8 -1.7h-1.7z"/>
</g>
<g fill="none" stroke="#dfdbd2" stroke-width="0.8" stroke-linecap="round">
<path d="M718 5.1q1.1 1.9 0 3.8" opacity="0.95"/><path d="M719.9 3.9q2 3.1 0 6.2" opacity="0.9"/><path d="M721.8 2.6q3 4.4 0 8.8" opacity="0.85"/>
</g>
<g fill="none" stroke="#dfdbd2">
<circle cx="790.55" cy="7" r="2.9" stroke-width="1.7"/>
<circle cx="790.55" cy="7" r="4.15" stroke-width="1.3" stroke-dasharray="1.2 2.06" stroke-dashoffset="0.6"/>
</g>
<rect x="789.25" y="1.6" width="2.6" height="5.6" fill="#4b4942"/>
<path d="M790.55 2.2v4.4" stroke="#dfdbd2" stroke-width="0.95" fill="none"/>
</svg>
</div>
<div id="tabbar" class="abs">
<svg class="abs" style="left:0;top:0" width="160" height="18" viewBox="0 14 160 18">
<defs><linearGradient id="tg" x1="0" y1="0" x2="0" y2="1"><stop offset="0" stop-color="#f8f7f6"/><stop offset="1" stop-color="#f2f1f0"/></linearGradient></defs>
<path d="M0 32V31.4C4.5 31.3 6.4 30.2 7.5 26.5C8.5 23 9 19.5 10.4 17C11.4 15.4 12.5 15.2 15 15.2H126C128.6 15.2 130 15.6 131.3 18.2C132.6 21 133 24 134.5 27.3C135.8 30.2 137.5 31.2 140.5 31.5C142.5 31.7 145 31.8 146 32z" fill="url(#tg)"/>
<!-- favicon -->
<path d="M14 23.7C17 21 20 19.6 23.6 19V23.8H14z" fill="#050505"/>
<path d="M15.2 19v4" stroke="#555" stroke-width="0.4"/>
<rect x="15.3" y="23.8" width="8.3" height="2.5" fill="#4be456"/>
<path d="M16.5 25h5.5" stroke="#2fb43a" stroke-width="0.7"/>
<rect x="15.2" y="26.4" width="8.4" height="1.3" fill="#2a2a2a"/>
<!-- close -->
<path d="M121.4 21.3l4.2 4.2M125.6 21.3l-4.2 4.2" stroke="#555" stroke-width="1.05" fill="none"/>
<!-- plus -->
<defs><linearGradient id="pg" x1="0" y1="0" x2="0" y2="1"><stop offset="0" stop-color="#cbe662"/><stop offset="1" stop-color="#86b526"/></linearGradient></defs>
<path d="M141.3 18.9h3.4v2.9h3.1v3.4h-3.1v2.9h-3.4v-2.9h-3.1v-3.4h3.1z" fill="url(#pg)" stroke="#6d9518" stroke-width="0.5"/>
</svg>
<div class="abs tabt">Munin :: localdomai…</div>
</div>
<div id="navbar" class="abs">
<svg class="abs" style="left:0;top:0" width="800" height="24" viewBox="0 32 800 24">
<defs><linearGradient id="bg" x1="0" y1="0" x2="0" y2="1"><stop offset="0" stop-color="#ffffff"/><stop offset="1" stop-color="#f3f2f0"/></linearGradient></defs>
<rect x="14" y="36.25" width="513.4" height="14.1" rx="1.6" fill="#fff" stroke="#b9b6b1" stroke-width="0.9"/>
<rect x="532" y="36.25" width="154.6" height="14.1" rx="1.6" fill="#fff" stroke="#b9b6b1" stroke-width="0.9"/>
<circle cx="11.4" cy="43.4" r="9.05" fill="url(#bg)" stroke="#c3cbd5" stroke-width="0.8"/>
<!-- back arrow -->
<path d="M8 43.4l4.6 -4.6l1.5 1.5l-1.7 1.6h3.7v3h-3.7l1.7 1.6l-1.5 1.5z" fill="#4f4f4f"/>
<!-- globe -->
<circle cx="28.1" cy="43.5" r="4.1" fill="#aeaeae"/>
<path d="M25.6 41.3q1.3 -1.4 2.6 -1q0.6 1 -0.6 2q-1.1 0.6 -1.2 1.9q-1.1 -1.2 -0.8 -2.9zM29.6 42.6q1.5 -0.2 2 1.2q-0.4 1.9 -1.9 2.4q-0.8 -1.6 -0.1 -3.6zM26.6 45.6q0.8 -0.3 1.3 0.5q-0.2 0.8 -0.9 0.9q-0.6 -0.5 -0.4 -1.4z" fill="#dcdcdc"/>
<!-- url dropdown + reload -->
<path d="M509.6 43.3h3.8l-1.9 2.3z" fill="#555"/>
<path d="M523.2 43.6a2.4 2.4 0 1 1 -0.9 -1.9" fill="none" stroke="#6a6a6a" stroke-width="1"/>
<path d="M521.6 40.2h2.3v2.3z" fill="#6a6a6a"/>
<!-- google icon -->
<rect x="534.3" y="39" width="8.7" height="9" fill="#3f76f0"/>
<text x="538.7" y="46.4" text-anchor="middle" font-family="Liberation Serif,serif" font-size="8.5" font-weight="bold" fill="#fff">8</text>
<path d="M546.2 43.3h3.6l-1.8 2.2z" fill="#555"/>
<!-- magnifier -->
<circle cx="679.6" cy="42.6" r="2.7" fill="#fff" stroke="#26389c" stroke-width="1.5"/>
<path d="M681.6 44.8l2.2 2.3" stroke="#222" stroke-width="1.5" stroke-linecap="round"/>
<!-- star -->
<path d="M700 39.3l1.35 2.9l3.15 0.4l-2.3 2.2l0.6 3.1l-2.8 -1.55l-2.8 1.55l0.6 -3.1l-2.3 -2.2l3.15 -0.4z" fill="none" stroke="#3a3a3a" stroke-width="1.05" stroke-linejoin="round"/>
<path d="M709.5 38.5v10.5" stroke="#d9d6d2" stroke-width="0.7"/>
<!-- bookmarks list -->
<rect x="714.6" y="40.7" width="7.2" height="6.6" rx="0.7" fill="none" stroke="#454545" stroke-width="1.1"/>
<path d="M716.6 40.5v-1.2h3.2v1.2M714.6 43h7.2M718.2 43v4.3" fill="none" stroke="#454545" stroke-width="0.9"/>
<!-- download -->
<path d="M739 40h3v3.6h2.6l-4.1 4.3l-4.1 -4.3h2.6z" fill="#505050"/>
<!-- home -->
<path d="M763 39.8l4.7 4.2h-1.3v3.9h-2.3v-2.6h-2.2v2.6h-2.3v-3.9h-1.3z" fill="#505050"/>
<path d="M774.6 37.5v12.5" stroke="#d9dee8" stroke-width="0.7"/>
<!-- hamburger -->
<path d="M783 40.6h9M783 43.6h9M783 46.6h9" stroke="#454545" stroke-width="1.5"/>
</svg>
<div class="abs urlt"><span class="d">127.0.0.1</span>/munin/localdomain/localhost.localdomain/index.html</div>
<div class="abs gt">Google</div>
</div>
<div id="status" class="abs"><span class="d">127.0.0.1</span>/munin/localdomain/localhost.localdomain/memory.html</div>
</div>
</body></html>
